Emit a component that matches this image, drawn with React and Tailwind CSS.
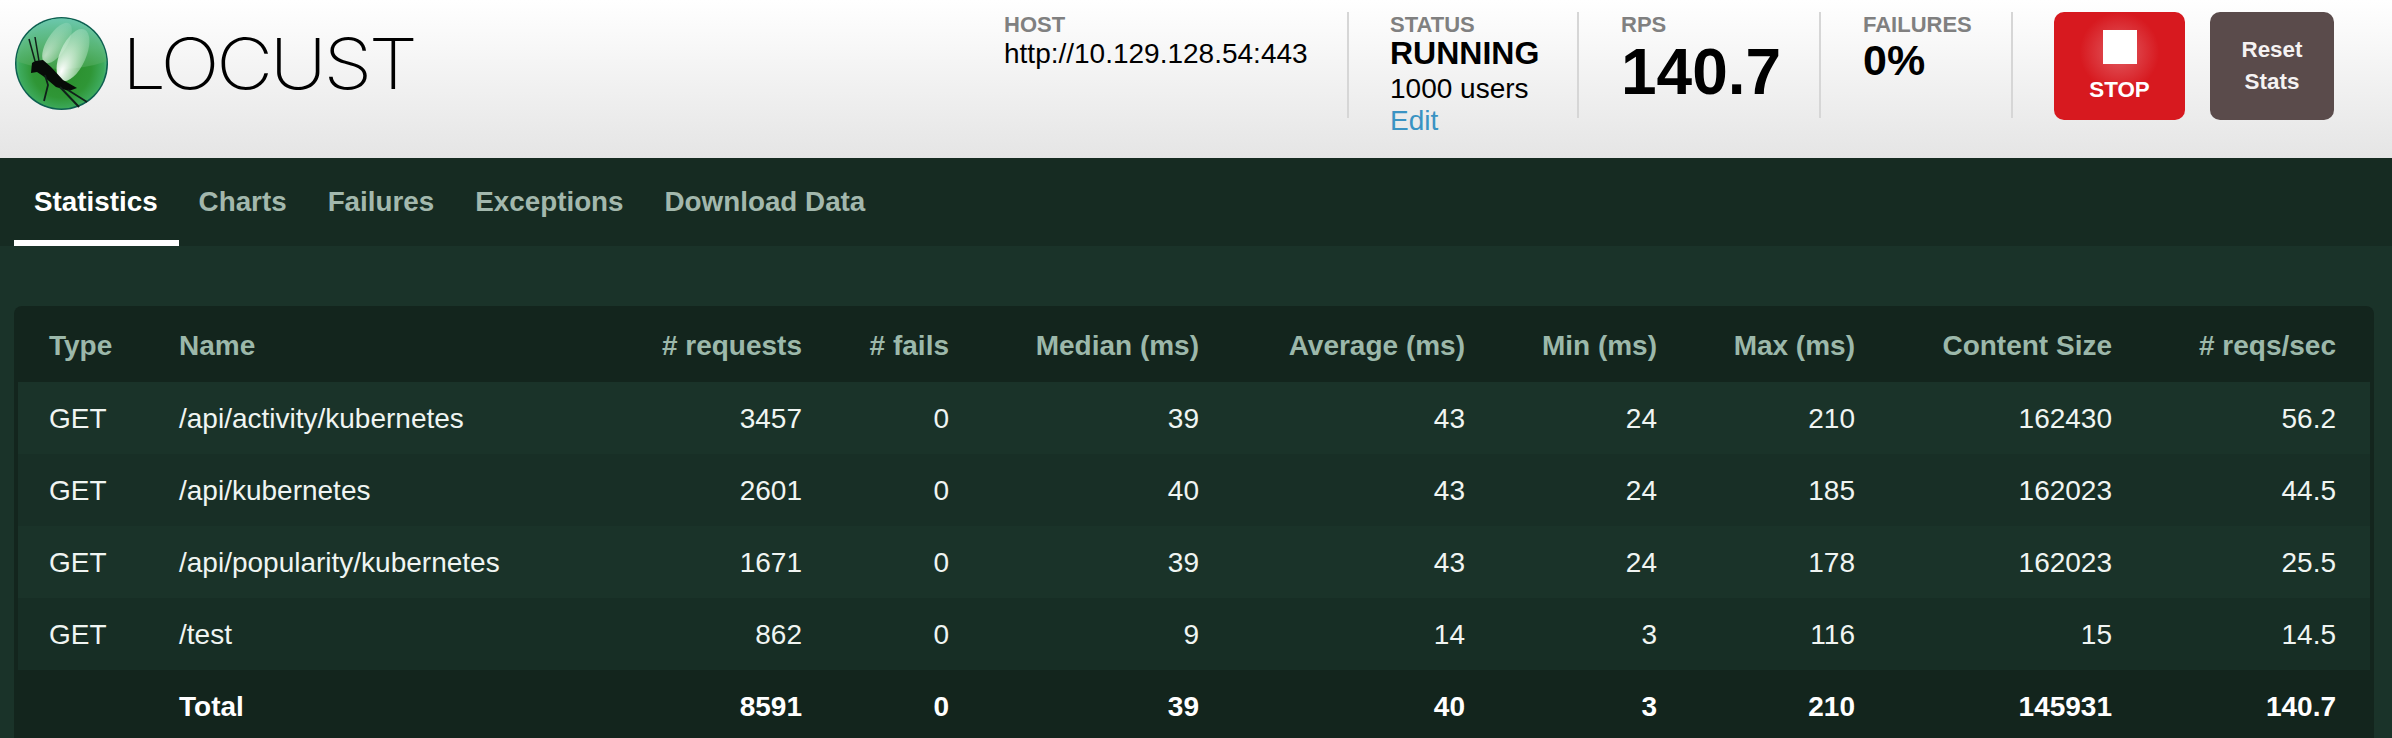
const rows = [
  ['GET', '/api/activity/kubernetes', 3457, 0, 39, 43, 24, 210, 162430, '56.2'],
  ['GET', '/api/kubernetes', 2601, 0, 40, 43, 24, 185, 162023, '44.5'],
  ['GET', '/api/popularity/kubernetes', 1671, 0, 39, 43, 24, 178, 162023, '25.5'],
  ['GET', '/test', 862, 0, 9, 14, 3, 116, 15, '14.5'],
]

const total = ['', 'Total', 8591, 0, 39, 40, 3, 210, 145931, '140.7']
const columns = ['# requests', '# fails', 'Median (ms)', 'Average (ms)', 'Min (ms)', 'Max (ms)', 'Content Size', '# reqs/sec']
const rowColors = ['bg-[#1a3329]', 'bg-[#182f26]', 'bg-[#1a3329]', 'bg-[#172e25]']
const tabs = ['Statistics', 'Charts', 'Failures', 'Exceptions', 'Download Data']

const Logo = () => (
  <svg width="93" height="93" viewBox="0 0 93 93" className="shrink-0">
    <defs>
      <radialGradient id="ballBase" cx="0.5" cy="0.55" r="0.55">
        <stop offset="0" stopColor="#2a8c2a" />
        <stop offset="0.6" stopColor="#2f9636" />
        <stop offset="0.85" stopColor="#3eab5e" />
        <stop offset="1" stopColor="#62c4a4" />
      </radialGradient>
      <linearGradient id="ballShine" x1="0" y1="0" x2="0" y2="1">
        <stop offset="0" stopColor="#6cc8b0" stopOpacity="0.95" />
        <stop offset="0.6" stopColor="#5fb97c" stopOpacity="0.8" />
        <stop offset="1" stopColor="#4fa958" stopOpacity="0.6" />
      </linearGradient>
      <radialGradient id="wingGlow" cx="0.35" cy="0.85" r="0.95">
        <stop offset="0" stopColor="#ffffff" stopOpacity="1" />
        <stop offset="0.45" stopColor="#dff5e4" stopOpacity="0.7" />
        <stop offset="1" stopColor="#c8f0d8" stopOpacity="0.2" />
      </radialGradient>
      <clipPath id="ballClip">
        <circle cx="46.5" cy="46.5" r="45" />
      </clipPath>
    </defs>
    <circle cx="46.5" cy="46.5" r="46.5" fill="#0d5f50" />
    <circle cx="46.5" cy="46.5" r="45" fill="url(#ballBase)" />
    <g clipPath="url(#ballClip)">
      <path d="M0 0 H93 V44 Q46 60 0 44 Z" fill="url(#ballShine)" />
    </g>
    <ellipse cx="42" cy="26" rx="10" ry="23" transform="rotate(32 42 26)" fill="url(#wingGlow)" opacity="0.6" />
    <ellipse cx="58" cy="38" rx="13" ry="28" transform="rotate(24 58 38)" fill="url(#wingGlow)" />
    <path d="M16 56 L17 46 L20 44 L28 43 L36 50 L48 63 L62 71 L54 74 L41 70 L28 59 L22 55 Z" fill="#070b08" />
    <g stroke="#10201a" fill="none">
      <path d="M14 22 L20 44" strokeWidth="1.5" />
      <path d="M20 20 L24 44" strokeWidth="1.5" />
      <path d="M30 58 L33 68 L29 84" strokeWidth="1.8" />
      <path d="M45 70 L64 90" strokeWidth="2" />
      <path d="M53 73 L72 85" strokeWidth="1.8" />
    </g>
  </svg>
)

const Stat = ({ label, className, children }) => (
  <div className={`h-[106px] border-r-2 border-[#d6d6d6] pt-[1px] ${className}`}>
    <div className="text-[22px] font-bold leading-[24px] text-[#808080]">{label}</div>
    {children}
  </div>
)

const App = () => {
  return (
    <div className="h-[738px] overflow-hidden bg-[#1a3329] font-['Liberation_Sans',Arial,sans-serif]">
      <header className="flex h-[158px] justify-between bg-gradient-to-b from-white to-[#e5e5e5] pt-[12px]">
        <div className="flex h-[93px] items-center pt-[10px] pl-[15px]">
          <Logo />
          <span className="ml-[14px] origin-left scale-x-[1.12] font-['Inter',sans-serif] text-[70px] font-extralight leading-none tracking-[-3px] text-black">
            LOCUST
          </span>
        </div>
        <div className="flex items-start pr-[58px]">
          <Stat label="HOST" className="w-[345px]">
            <div className="text-[28px] leading-[33px] text-black">http://10.129.128.54:443</div>
          </Stat>
          <Stat label="STATUS" className="w-[230px] pl-[41px]">
            <div className="text-[32px] font-bold leading-[33px] text-black">RUNNING</div>
            <div className="text-[28px] leading-[38px] text-black">1000 users</div>
            <div className="text-[28px] leading-[26px] text-[#3a93c3]">Edit</div>
          </Stat>
          <Stat label="RPS" className="w-[242px] pl-[42px]">
            <div className="text-[64px] font-bold leading-[70px] text-black">140.7</div>
          </Stat>
          <Stat label="FAILURES" className="w-[192px] pl-[42px]">
            <div className="text-[43px] font-bold leading-[47px] text-black">0%</div>
          </Stat>
          <button className="ml-[41px] flex h-[108px] w-[131px] flex-col items-center rounded-[10px] bg-[#d7191f] bg-[radial-gradient(circle_at_50%_37%,#e25c62_0%,#d7191f_42%)] pt-[18px] text-[22.4px] font-bold text-white">
            <span className="block h-[34px] w-[34px] bg-white"></span>
            <span className="mt-[14px] leading-[24px]">STOP</span>
          </button>
          <button className="ml-[25px] h-[108px] w-[124px] rounded-[10px] bg-[#5a4b4b] text-[22.4px] font-bold leading-[32px] text-[#f5f2f2]">
            Reset
            <br />
            Stats
          </button>
        </div>
      </header>

      <nav className="flex h-[88px] bg-[#162b22] pl-[14px]">
        {tabs.map((tab, i) => (
          <a
            key={tab}
            className={`flex items-center pr-[21px] pl-[20px] text-[27.8px] font-bold ${
              i === 0 ? 'border-b-[6px] border-white pt-[6px] text-white' : 'text-[#a3b8ad]'
            }`}
          >
            {tab}
          </a>
        ))}
      </nav>

      <main className="mt-[60px] ml-[14px] mr-[18px] rounded-t-[8px] bg-[#13251d] px-[4px] text-[28px] text-[#f0f5f2]">
        <table className="w-full table-fixed border-collapse">
          <colgroup>
            <col className="w-[128px]" />
            <col className="w-[500px]" />
            <col className="w-[190px]" />
            <col className="w-[147px]" />
            <col className="w-[250px]" />
            <col className="w-[266px]" />
            <col className="w-[192px]" />
            <col className="w-[198px]" />
            <col className="w-[257px]" />
            <col className="w-[224px]" />
          </colgroup>
          <thead>
            <tr className="h-[76px] text-[#9cb8aa]">
              <th className="pt-[4px] pl-[31px] text-left font-bold">Type</th>
              <th className="pt-[4px] pl-[33px] text-left font-bold">Name</th>
              {columns.map((c) => (
                <th key={c} className="pt-[4px] pr-[34px] text-right font-bold">{c}</th>
              ))}
            </tr>
          </thead>
          <tbody>
            {rows.map((row, i) => (
              <tr key={row[1]} className={`h-[72px] ${rowColors[i]}`}>
                <td className="pt-[2px] pl-[31px]">{row[0]}</td>
                <td className="pt-[2px] pl-[33px]">{row[1]}</td>
                {row.slice(2).map((v, j) => (
                  <td key={j} className="pt-[2px] pr-[34px] text-right">{v}</td>
                ))}
              </tr>
            ))}
          </tbody>
          <tfoot>
            <tr className="h-[72px] font-bold text-white">
              <td className="pt-[2px] pl-[31px]">{total[0]}</td>
              <td className="pt-[2px] pl-[33px]">{total[1]}</td>
              {total.slice(2).map((v, j) => (
                <td key={j} className="pt-[2px] pr-[34px] text-right">{v}</td>
              ))}
            </tr>
          </tfoot>
        </table>
      </main>
    </div>
  )
}

export default App
